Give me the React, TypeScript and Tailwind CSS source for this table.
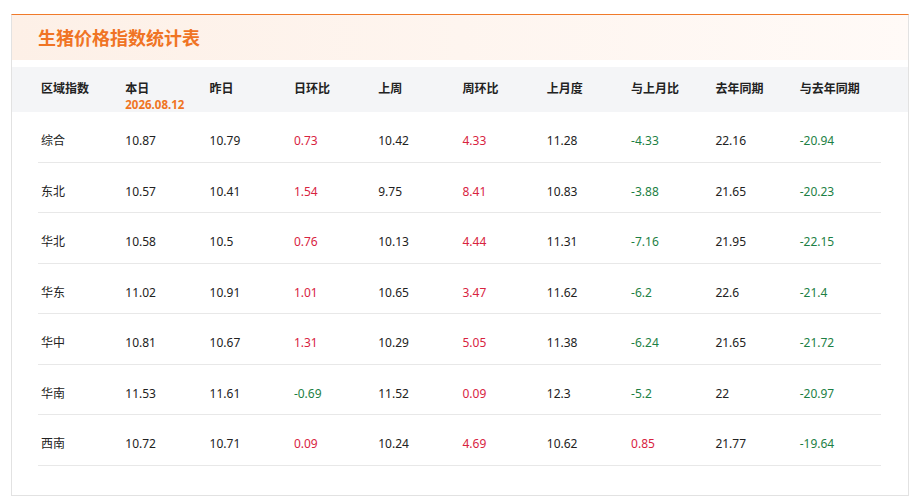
import React from "react";

type Row = string[];

const rows: Row[] = [
  ["综合", "10.87", "10.79", "0.73", "10.42", "4.33", "11.28", "-4.33", "22.16", "-20.94"],
  ["东北", "10.57", "10.41", "1.54", "9.75", "8.41", "10.83", "-3.88", "21.65", "-20.23"],
  ["华北", "10.58", "10.5", "0.76", "10.13", "4.44", "11.31", "-7.16", "21.95", "-22.15"],
  ["华东", "11.02", "10.91", "1.01", "10.65", "3.47", "11.62", "-6.2", "22.6", "-21.4"],
  ["华中", "10.81", "10.67", "1.31", "10.29", "5.05", "11.38", "-6.24", "21.65", "-21.72"],
  ["华南", "11.53", "11.61", "-0.69", "11.52", "0.09", "12.3", "-5.2", "22", "-20.97"],
  ["西南", "10.72", "10.71", "0.09", "10.24", "4.69", "10.62", "0.85", "21.77", "-19.64"],
];

const headers = ["区域指数", "本日", "昨日", "日环比", "上周", "周环比", "上月度", "与上月比", "去年同期", "与去年同期"];
const changeCols = new Set([3, 5, 7, 9]);

function cellColor(i: number, v: string) {
  if (!changeCols.has(i)) return "text-[#222222]";
  return v.startsWith("-") ? "text-[#1d7f45]" : "text-[#d8233f]";
}

export default function App() {
  return (
    <div
      className="w-[916px] h-[502px] bg-white pt-[14px] pl-[11px]"
      style={{ fontFamily: '"Noto Sans", "Noto Sans CJK SC", sans-serif' }}
    >
      <div className="w-[898px] h-[482px] border border-[#e2e2e2] border-t-[#f07a2a] bg-white">
        <div className="h-[45px] flex items-center pl-[26px] bg-gradient-to-r from-[#fdf0e7] to-[#fffaf7]">
          <span className="text-[18px] font-bold text-[#f07424] leading-none">生猪价格指数统计表</span>
        </div>
        <div className="mt-[7px] h-[45px] bg-[#f4f5f7] pl-[26px] pr-[27px] grid grid-cols-10">
          {headers.map((h, i) => (
            <div key={h} className="pl-[3px] pt-[13px] flex flex-col">
              <span className="text-[12px] font-bold text-[#222222] leading-[17px]">{h}</span>
              {i === 1 && (
                <span className="text-[11.5px] font-bold text-[#f07424] leading-[13px] mt-[1px]">2026.08.12</span>
              )}
            </div>
          ))}
        </div>
        <div className="pl-[26px] pr-[27px]">
          {rows.map((r) => (
            <div key={r[0]} className="h-[50.5px] border-b border-[#e8e8e8] grid grid-cols-10">
              {r.map((v, i) => (
                <div key={i} className={`pl-[3px] pt-[19px] text-[12px] leading-[20px] ${cellColor(i, v)}`}>
                  {v}
                </div>
              ))}
            </div>
          ))}
        </div>
      </div>
    </div>
  );
}
